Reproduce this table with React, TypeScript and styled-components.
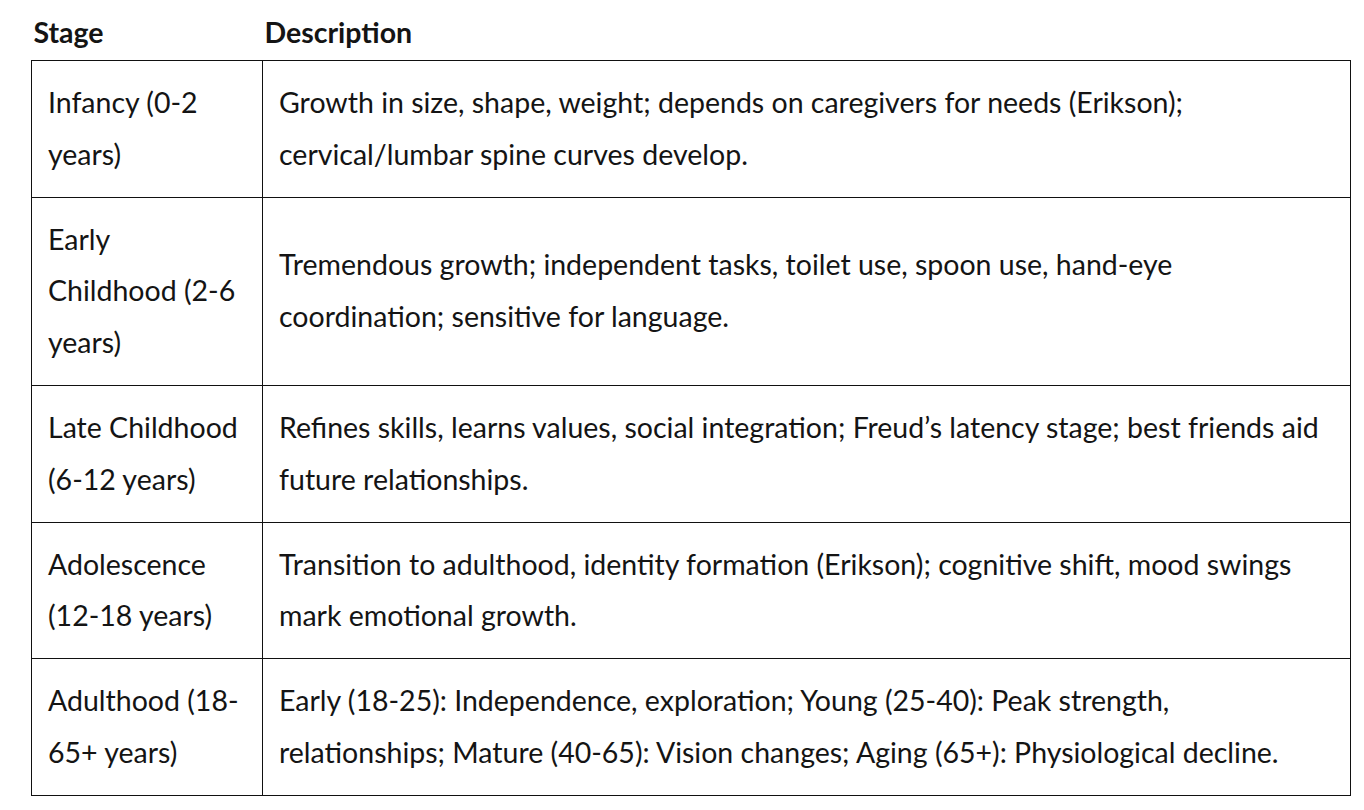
import React from "react";
import styled, { createGlobalStyle } from "styled-components";

const Global = createGlobalStyle`
  html, body { margin: 0; padding: 0; background: #ffffff; }
  body { font-family: Lato, "Noto Sans", sans-serif; color: #141414; }
`;

const Page = styled.div`
  padding: 0 0 0 31px;
`;

const Table = styled.table`
  border-collapse: collapse;
  table-layout: fixed;
  width: 1320px;
  font-family: Lato, "Noto Sans", sans-serif;
  font-size: 28.5px;
  line-height: 51.8px;
  color: #141414;
`;

const StageCol = styled.col`
  width: 231px;
`;

const HeadCell = styled.th`
  text-align: left;
  font-weight: 700;
  padding: 7px 2px 1px 2px;
  height: 52px;
  border: none;
`;

const Cell = styled.td<{ $narrow?: boolean }>`
  border: 1px solid #111111;
  padding: 16px ${(p) => (p.$narrow ? "20px" : "16px")} 16px 16px;
  vertical-align: middle;
  font-weight: 400;
`;

const rows: [string, string][] = [
  [
    "Infancy (0-2 years)",
    "Growth in size, shape, weight; depends on caregivers for needs (Erikson); cervical/lumbar spine curves develop.",
  ],
  [
    "Early Childhood (2-6 years)",
    "Tremendous growth; independent tasks, toilet use, spoon use, hand-eye coordination; sensitive for language.",
  ],
  [
    "Late Childhood (6-12 years)",
    "Refines skills, learns values, social integration; Freud\u2019s latency stage; best friends aid future relationships.",
  ],
  [
    "Adolescence (12-18 years)",
    "Transition to adulthood, identity formation (Erikson); cognitive shift, mood swings mark emotional growth.",
  ],
  [
    "Adulthood (18-65+ years)",
    "Early (18-25): Independence, exploration; Young (25-40): Peak strength, relationships; Mature (40-65): Vision changes; Aging (65+): Physiological decline.",
  ],
];

export default function App() {
  return (
    <>
      <Global />
      <Page>
        <Table>
          <colgroup>
            <StageCol />
            <col />
          </colgroup>
          <thead>
            <tr>
              <HeadCell>Stage</HeadCell>
              <HeadCell>Description</HeadCell>
            </tr>
          </thead>
          <tbody>
            {rows.map(([stage, desc]) => (
              <tr key={stage}>
                <Cell $narrow>{stage}</Cell>
                <Cell>{desc}</Cell>
              </tr>
            ))}
          </tbody>
        </Table>
      </Page>
    </>
  );
}
